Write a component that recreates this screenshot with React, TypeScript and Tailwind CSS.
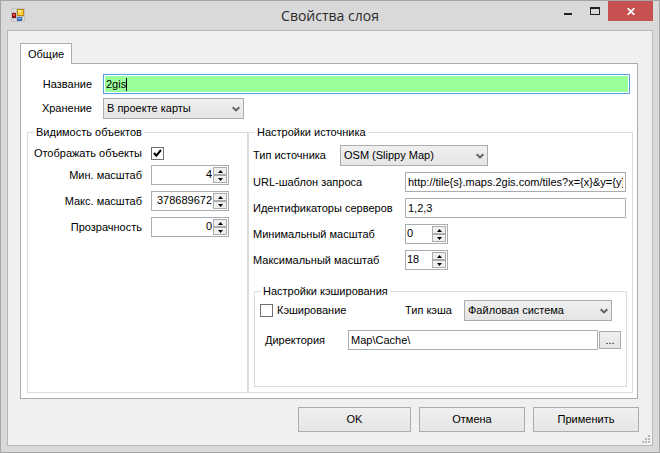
import { useId, useState } from "react";
import type { ReactNode } from "react";

const face = "bg-linear-to-b from-[#f0f0f0] to-[#e5e5e5] border border-[#acacac]";

function Combo({ id, options, className }: { id: string; options: string[]; className: string }) {
  return (
    <div className={`relative h-[21px] shrink-0 ${className}`}>
      <select id={id} className={`block h-full w-full appearance-none rounded-none pr-5 pl-[3px] outline-none ${face}`}>
        {options.map((o) => (
          <option key={o}>{o}</option>
        ))}
      </select>
      <svg className="pointer-events-none absolute top-[8px] right-[4px]" width="8" height="6" viewBox="0 0 8 6" aria-hidden="true">
        <path d="M0.7 1.2 L4 4.4 L7.3 1.2" fill="none" stroke="#606060" strokeWidth="2" />
      </svg>
    </div>
  );
}

function StepButton({ up, onClick }: { up?: boolean; onClick: () => void }) {
  return (
    <button
      type="button"
      tabIndex={-1}
      aria-label={up ? "Больше" : "Меньше"}
      onClick={onClick}
      className="flex h-2 w-[14px] items-center justify-center border border-[#acacac] bg-[#f0f0f0]"
    >
      <svg width="5" height="3" viewBox="0 0 5 3" aria-hidden="true">
        <path d={up ? "M0 3 L2.5 0 L5 3 Z" : "M0 0 L2.5 3 L5 0 Z"} fill="#000" />
      </svg>
    </button>
  );
}

function Spinner({ id, initial, className, align }: { id: string; initial: number; className: string; align: string }) {
  const [value, setValue] = useState(String(initial));
  const step = (n: number) => setValue(String((Number(value) || 0) + n));
  return (
    <div className={`flex h-5 items-center border border-[#abadb3] bg-white pr-px ${className}`}>
      <input
        id={id}
        inputMode="numeric"
        value={value}
        onChange={(e) => setValue(e.target.value)}
        className={`h-full min-w-0 flex-1 bg-transparent px-px pb-[2px] outline-none ${align}`}
      />
      <div className="flex flex-col">
        <StepButton up onClick={() => step(1)} />
        <StepButton onClick={() => step(-1)} />
      </div>
    </div>
  );
}

function TextBox({ id, value, className }: { id: string; value: string; className: string }) {
  return (
    <input
      id={id}
      defaultValue={value}
      className={`h-5 min-w-0 border border-[#abadb3] bg-white px-[2px] outline-none ${className}`}
    />
  );
}

function CheckBox({ id, checked }: { id: string; checked?: boolean }) {
  return (
    <span className="relative block size-[13px] shrink-0">
      <input id={id} type="checkbox" defaultChecked={checked} className="peer block size-[13px] appearance-none border border-[#707070] bg-white" />
      <svg className="pointer-events-none absolute inset-0 hidden peer-checked:block" width="13" height="13" viewBox="0 0 13 13" aria-hidden="true">
        <path d="M3 6 L5.3 8.7 L10 3" fill="none" stroke="#000" strokeWidth="2" />
      </svg>
    </span>
  );
}

function LeftRow({ label, children }: { label: string; children: (id: string) => ReactNode }) {
  const id = useId();
  return (
    <div className="flex items-center gap-[9px]">
      <label htmlFor={id} className="w-[114px] shrink-0 text-right whitespace-nowrap">
        {label}
      </label>
      {children(id)}
    </div>
  );
}

function RightRow({ label, labelWidth = "w-[152px]", children }: { label: string; labelWidth?: string; children: (id: string) => ReactNode }) {
  const id = useId();
  return (
    <div className="flex items-center">
      <label htmlFor={id} className={`shrink-0 whitespace-nowrap ${labelWidth}`}>
        {label}
      </label>
      {children(id)}
    </div>
  );
}

function DialogButton({ children, className }: { children: string; className: string }) {
  return (
    <button type="button" className={`h-[25px] text-center ${face} ${className}`}>
      {children}
    </button>
  );
}

function TitleBar() {
  return (
    <header className="grid h-[29px] grid-cols-[1fr_auto_1fr] items-start">
      <svg className="mt-[7px] ml-1" width="14" height="14" viewBox="0 0 14 14" aria-hidden="true">
        <rect width="14" height="14" fill="#c3c3c3" />
        <path d="M1 1h1v3h-1zM3 1h2v3h-2zM1 11h1v2h-1zM3 11h2v2h-2zM12 9h1v4h-1z" fill="#dedede" />
        <rect x="6" y="1" width="7" height="7" fill="#b98a12" />
        <rect x="7" y="2" width="5" height="5" fill="#ffcf3f" />
        <rect x="7" y="2" width="3" height="2" fill="#ffe79a" />
        <rect x="1" y="5" width="4" height="5" fill="#8f1010" />
        <rect x="2" y="6" width="2" height="2" fill="#e05a4a" />
        <rect x="6" y="9" width="5" height="4" fill="#3a6fc8" />
        <rect x="7" y="10" width="3" height="1" fill="#8fb6f0" />
      </svg>
      <h1 className="mt-[5px] font-['Open_Sans','Noto_Sans',sans-serif] text-[14px] leading-5 text-[#2b2b2b]">Свойства слоя</h1>
      <div className="flex justify-end">
        <button type="button" aria-label="Свернуть" className="flex h-5 w-[27px] items-start pt-3 pl-[10px]">
          <span className="block h-[2px] w-2 bg-[#222]" />
        </button>
        <button type="button" aria-label="Развернуть" className="flex h-5 w-[27px] items-start pt-[6px] pl-[9px]">
          <span className="block h-2 w-[10px] border border-t-2 border-[#222]" />
        </button>
        <button type="button" aria-label="Закрыть" className="flex h-5 w-[45px] items-center justify-center bg-[#c75050]">
          <svg width="8" height="7" viewBox="0 0 8 7" aria-hidden="true">
            <path d="M0.7 0.2 L7.3 6.8 M7.3 0.2 L0.7 6.8" stroke="#fff" strokeWidth="1.8" />
          </svg>
        </button>
      </div>
    </header>
  );
}

export default function App() {
  return (
    <div className="flex min-h-screen w-full flex-col border border-[#a5a5a5] bg-[#d9d9d9] px-[6px] pb-[6px] font-['Liberation_Sans',Arial,sans-serif] text-[11px] leading-[13px] text-black">
      <TitleBar />
      <main className="flex flex-1 flex-col border border-[#b8b8b8] bg-[#f0f0f0] pt-3 pr-[14px] pb-[13px] pl-3">
        <div role="tablist" className="z-10 -mb-px flex">
          <button type="button" role="tab" aria-selected="true" className="h-[21px] border border-b-0 border-[#acacac] bg-white px-[7px]">
            Общие
          </button>
        </div>
        <section role="tabpanel" className="flex flex-1 flex-col border border-[#acacac] bg-white pt-[10px] pr-1 pb-[5px] pl-[6px]">
          <div className="flex items-center pr-[3px]">
            <label htmlFor="layer-name" className="w-[76px] shrink-0 pr-[11px] text-right">
              Название
            </label>
            <div className="flex h-5 flex-1 border border-[#569de5] bg-white p-px">
              <div className="flex flex-1 items-center bg-[#99ff99]">
                <input id="layer-name" defaultValue="2gis" className="field-sizing-content h-full bg-transparent pl-px outline-none" />
                <span className="h-[13px] w-px bg-black" />
              </div>
            </div>
          </div>
          <div className="mt-1 flex items-center">
            <label htmlFor="layer-storage" className="w-[76px] shrink-0 pr-[11px] text-right">
              Хранение
            </label>
            <Combo id="layer-storage" options={["В проекте карты"]} className="w-[141px]" />
          </div>

          <div className="mt-[7px] flex flex-1">
            <fieldset className="w-[221px] shrink-0 border border-[#dcdcdc]">
              <legend className="ml-[6px] px-[2px]">Видимость объектов</legend>
              <div className="pt-2">
                <LeftRow label="Отображать объекты">{(id) => <CheckBox id={id} checked />}</LeftRow>
              </div>
              <div className="mt-[5px] flex flex-col gap-[6px]">
                <LeftRow label="Мин. масштаб">{(id) => <Spinner id={id} initial={4} className="w-[78px]" align="text-right" />}</LeftRow>
                <LeftRow label="Макс. масштаб">{(id) => <Spinner id={id} initial={378689672} className="w-[78px]" align="text-right" />}</LeftRow>
                <LeftRow label="Прозрачность">{(id) => <Spinner id={id} initial={0} className="w-[78px]" align="text-right" />}</LeftRow>
              </div>
            </fieldset>

            <fieldset className="min-w-0 flex-1 border border-[#dcdcdc] pb-[5px]">
              <legend className="ml-[6px] px-[2px]">Настройки источника</legend>
              <div className="flex flex-col gap-[6px] pt-[6px] pr-[6px] pl-1">
                <RightRow label="Тип источника" labelWidth="w-[87px]">
                  {(id) => <Combo id={id} options={["OSM (Slippy Map)"]} className="w-[148px]" />}
                </RightRow>
                <RightRow label="URL-шаблон запроса">
                  {(id) => <TextBox id={id} value="http://tile{s}.maps.2gis.com/tiles?x={x}&y={y}&z={z}" className="flex-1" />}
                </RightRow>
                <RightRow label="Идентификаторы серверов">{(id) => <TextBox id={id} value="1,2,3" className="flex-1" />}</RightRow>
                <RightRow label="Минимальный масштаб">{(id) => <Spinner id={id} initial={0} className="w-[43px]" align="text-left" />}</RightRow>
                <RightRow label="Максимальный масштаб">{(id) => <Spinner id={id} initial={18} className="w-[43px]" align="text-left" />}</RightRow>
              </div>

              <fieldset className="mt-[15px] mr-[5px] ml-[5px] border border-[#dcdcdc] pb-9">
                <legend className="ml-[6px] px-[2px]">Настройки кэширования</legend>
                <div className="flex items-center pt-[2px] pr-[14px] pl-[5px]">
                  <CheckBox id="cache-on" />
                  <label htmlFor="cache-on" className="ml-1">
                    Кэширование
                  </label>
                  <label htmlFor="cache-type" className="ml-auto w-[59px] whitespace-nowrap">
                    Тип кэша
                  </label>
                  <Combo id="cache-type" options={["Файловая система"]} className="w-[148px]" />
                </div>
                <div className="mt-[9px] flex items-center pr-[5px] pl-[10px]">
                  <label htmlFor="cache-dir" className="w-[83px] shrink-0">
                    Директория
                  </label>
                  <TextBox id="cache-dir" value="Map\Cache\" className="flex-1" />
                  <button type="button" aria-label="Обзор" className={`ml-px h-[18px] w-[22px] leading-[13px] ${face}`}>
                    ...
                  </button>
                </div>
              </fieldset>
            </fieldset>
          </div>
        </section>

        <footer className="relative mt-2 flex justify-end gap-2">
          <DialogButton className="w-[113px]">OK</DialogButton>
          <DialogButton className="w-[106px]">Отмена</DialogButton>
          <DialogButton className="-mr-px w-[106px]">Применить</DialogButton>
          <svg className="absolute -right-3 -bottom-[11px]" width="8" height="8" viewBox="0 0 8 8" fill="#b8b8b8" aria-hidden="true">
            <path d="M6 0h2v2H6zM3 3h2v2H3zM6 3h2v2H6zM0 6h2v2H0zM3 6h2v2H3zM6 6h2v2H6z" />
          </svg>
        </footer>
      </main>
    </div>
  );
}
